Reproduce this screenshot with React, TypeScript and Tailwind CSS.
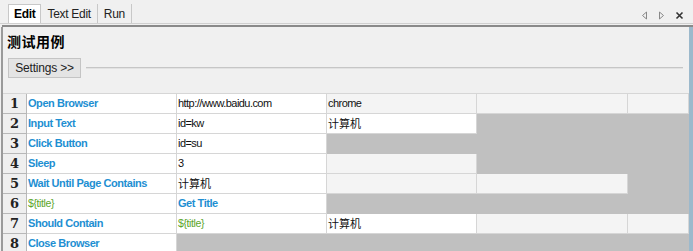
import React from "react";

type Kind = "w" | "l" | "g";
type Cell = { t?: string; k?: Kind; s?: "kw" | "var" | "txt" | "cjk" };

const rows: Cell[][] = [
  [
    { t: "Open Browser", k: "w", s: "kw" },
    { t: "http://www.baidu.com", k: "w", s: "txt" },
    { t: "chrome", k: "l", s: "txt" },
    { k: "l" },
    { k: "l" },
  ],
  [
    { t: "Input Text", k: "w", s: "kw" },
    { t: "id=kw", k: "w", s: "txt" },
    { t: "计算机", k: "w", s: "cjk" },
    { k: "g" },
    { k: "g" },
  ],
  [
    { t: "Click Button", k: "w", s: "kw" },
    { t: "id=su", k: "w", s: "txt" },
    { k: "g" },
    { k: "g" },
    { k: "g" },
  ],
  [
    { t: "Sleep", k: "w", s: "kw" },
    { t: "3", k: "w", s: "txt" },
    { k: "l" },
    { k: "g" },
    { k: "g" },
  ],
  [
    { t: "Wait Until Page Contains", k: "w", s: "kw" },
    { t: "计算机", k: "w", s: "cjk" },
    { k: "l" },
    { k: "l" },
    { k: "g" },
  ],
  [
    { t: "${title}", k: "w", s: "var" },
    { t: "Get Title", k: "w", s: "kw" },
    { k: "g" },
    { k: "g" },
    { k: "g" },
  ],
  [
    { t: "Should Contain", k: "w", s: "kw" },
    { t: "${title}", k: "w", s: "var" },
    { t: "计算机", k: "w", s: "cjk" },
    { k: "l" },
    { k: "l" },
  ],
  [
    { t: "Close Browser", k: "w", s: "kw" },
    { k: "g" },
    { k: "g" },
    { k: "g" },
    { k: "g" },
  ],
];

const widths = ["w-[150px]", "w-[150px]", "w-[150px]", "w-[151px]", "w-[61px]"];

function GridCell({ c, i }: { c: Cell; i: number }) {
  const bg =
    c.k === "g"
      ? "bg-[#c0c0c0] border-[#c0c0c0]"
      : c.k === "l"
      ? "bg-[#f4f4f4] border-[#d6d6d6]"
      : "bg-white border-[#d6d6d6]";
  const txt =
    c.s === "kw"
      ? "font-bold text-[#1e8fd2] text-[11px] tracking-[-0.45px]"
      : c.s === "var"
      ? "text-[#5aa52a] text-[10.5px] tracking-[-0.4px]"
      : c.s === "cjk"
      ? "text-[#111] text-[11px] [font-family:'Noto_Sans_CJK_SC',sans-serif]"
      : "text-[#111] text-[11px] tracking-[-0.55px]";
  return (
    <div
      className={`${widths[i]} h-full shrink-0 border-r border-b ${bg} flex items-center pl-[1px] overflow-hidden whitespace-nowrap`}
    >
      {c.t && <span className={txt}>{c.t}</span>}
    </div>
  );
}

export default function App() {
  return (
    <div className="w-[693px] h-[251px] bg-[#f0f0f0] overflow-hidden flex flex-col [font-family:'Liberation_Sans',Arial,sans-serif] relative">
      {/* tab bar */}
      <div className="h-[23px] flex items-end pl-[8px] pr-[8px] shrink-0">
        <div className="h-[19px] px-[5px] bg-white border border-b-0 border-[#c8c8c8] flex items-center text-[12px] font-bold text-black tracking-[-0.3px]">
          Edit
        </div>
        <div className="h-[19px] px-[6px] flex items-center text-[12px] text-[#222] border-r border-[#c8c8c8] tracking-[-0.3px]">
          Text Edit
        </div>
        <div className="h-[19px] px-[6px] flex items-center text-[12px] text-[#222] border-r border-[#c8c8c8] tracking-[-0.3px]">
          Run
        </div>
        <div className="flex-1" />
        <div className="h-[19px] flex items-center gap-[10px] pr-[1px] pt-[3px]">
          <svg width="7" height="9" viewBox="0 0 7 9">
            <path d="M5.5 1 L1.5 4.5 L5.5 8 Z" fill="none" stroke="#888" strokeWidth="1" />
          </svg>
          <svg width="7" height="9" viewBox="0 0 7 9">
            <path d="M1.5 1 L5.5 4.5 L1.5 8 Z" fill="none" stroke="#888" strokeWidth="1" />
          </svg>
          <svg width="9" height="9" viewBox="0 0 9 9">
            <path d="M1.5 1.5 L7.5 7.5 M7.5 1.5 L1.5 7.5" stroke="#333" strokeWidth="1.6" />
          </svg>
        </div>
      </div>
      <div className="h-[1px] bg-[#d0d0d0] shrink-0" />
      <div className="h-[1px] bg-[#f0f0f0] shrink-0" />
      <div className="h-[2px] bg-[#8a8a8a] shrink-0 ml-[2px]" />
      {/* body */}
      <div className="flex-1 flex border-l-[2px] border-[#9a9a9a] ml-[1px] min-h-0 overflow-hidden">
        <div className="flex-1 flex flex-col min-w-0">
          <div className="h-[29px] shrink-0 flex items-center pl-[4px] text-[14px] font-bold text-black [font-family:'Noto_Sans_CJK_SC',sans-serif] tracking-[0.5px]">
            测试用例
          </div>
          <div className="h-[24px] shrink-0 flex items-center pl-[5px] pr-[6px] gap-[5px]">
            <div className="h-[20px] w-[73px] border border-[#c4c4c4] bg-[#e4e4e4] flex items-center justify-center text-[12px] text-[#222] tracking-[-0.2px]">
              Settings &gt;&gt;
            </div>
            <div className="flex-1 flex flex-col">
              <div className="h-[1px] bg-[#c6c6c6]" />
              <div className="h-[1px] bg-[#e2e2e2]" />
            </div>
          </div>
          <div className="h-[13px] shrink-0" />
          <div className="flex flex-col border-t border-[#d6d6d6] shrink-0">
            {rows.map((r, ri) => (
              <div key={ri} className="h-[20px] flex shrink-0">
                <div className="w-[24px] shrink-0 h-full bg-[#efefef] border-r border-b border-[#b8b8b8] flex items-center justify-center text-[13px] font-bold text-[#222] [font-family:'DejaVu_Serif',serif]">
                  {ri + 1}
                </div>
                {r.map((c, ci) => (
                  <GridCell key={ci} c={c} i={ci} />
                ))}
              </div>
            ))}
          </div>
        </div>
        <div className="w-[4px] bg-[#9cb9cc] shrink-0" />
      </div>
    </div>
  );
}
